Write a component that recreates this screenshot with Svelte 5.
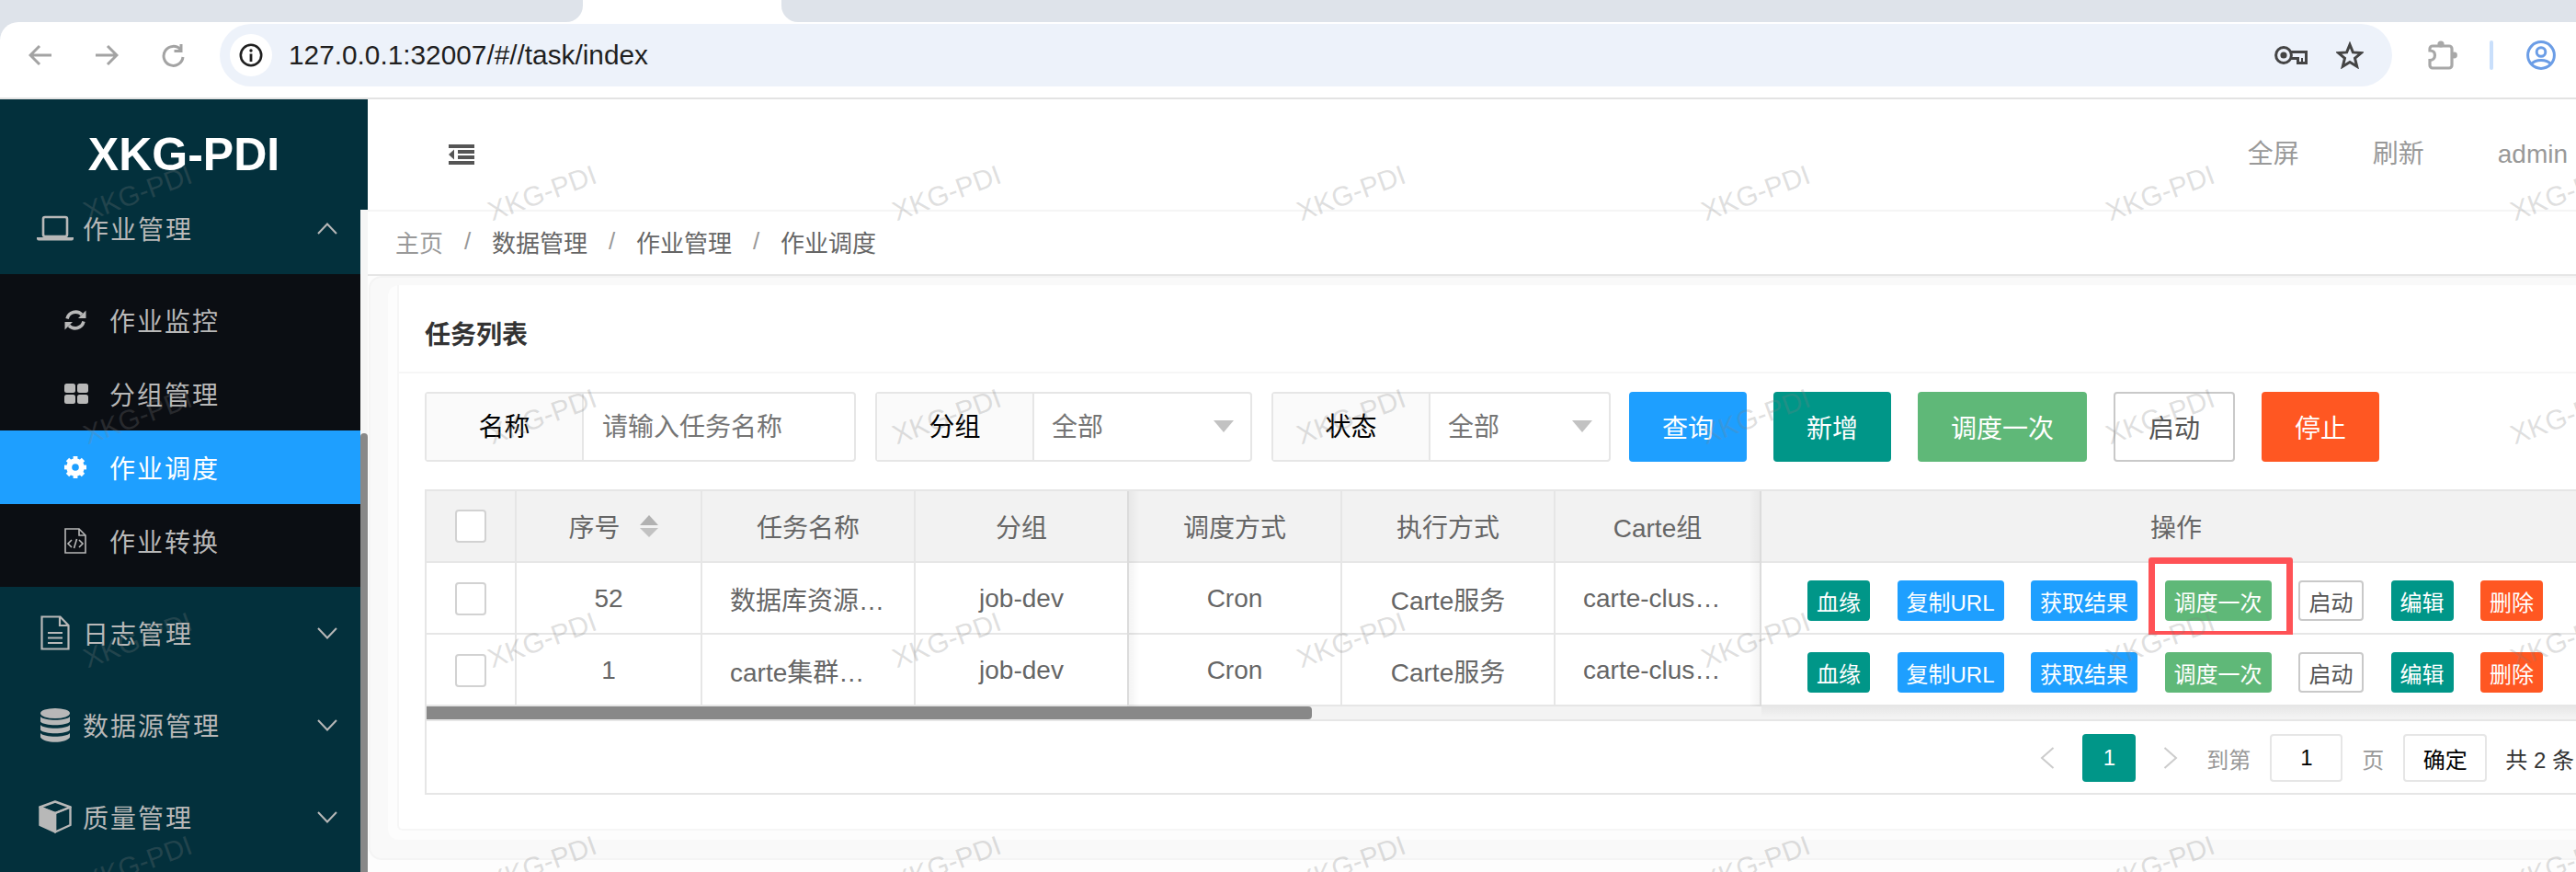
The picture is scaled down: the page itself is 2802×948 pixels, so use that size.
<script>
	const subItems = [
		{ name: '作业监控', icon: 'refresh' },
		{ name: '分组管理', icon: 'grid' },
		{ name: '作业调度', icon: 'gear', active: true },
		{ name: '作业转换', icon: 'code' }
	];

	const groups = [
		{ name: '日志管理', icon: 'log' },
		{ name: '数据源管理', icon: 'db' },
		{ name: '质量管理', icon: 'cube' }
	];

	const columns = ['调度方式', '执行方式', 'Carte组'];

	const rows = [
		{ id: 52, name: '数据库资源同步作业', group: 'job-dev', mark: true },
		{ id: 1, name: 'carte集群监控作业任务', group: 'job-dev', mark: false }
	];

	const actions = [
		{ label: '血缘', tone: 'teal' },
		{ label: '复制URL', tone: 'blue' },
		{ label: '获取结果', tone: 'blue' },
		{ label: '调度一次', tone: 'green', marked: true },
		{ label: '启动', tone: 'plain' },
		{ label: '编辑', tone: 'teal' },
		{ label: '删除', tone: 'orange' }
	];

	const teeth = [0, 45, 90, 135, 180, 225, 270, 315];
	const marks = Array.from({ length: 28 });
</script>

<div class="page">
	<div class="chrome">
		<div class="tabs">
			<div class="tab-l"></div>
			<div class="tab-on"></div>
			<div class="tab-r"></div>
		</div>
		<div class="toolbar">
			<svg class="nav-ic" width="26" height="24" viewBox="0 0 26 24"><path d="M25 12H2M12 2 2 12l10 10" /></svg>
			<svg class="nav-ic" width="26" height="24" viewBox="0 0 26 24"><path d="M1 12h23M14 2l10 10-10 10" /></svg>
			<svg class="nav-ic" width="26" height="26" viewBox="0 0 26 26"><path d="M21.5 7A10.5 10.5 0 1 0 24 15" /><path d="M22 1v7.5h-7.5" /></svg>
			<div class="address">
				<div class="info">
					<svg width="26" height="26" viewBox="0 0 26 26">
						<circle cx="13" cy="13" r="11.2" fill="none" stroke="#1f1f1f" stroke-width="2.6" />
						<circle cx="13" cy="8" r="1.7" fill="#1f1f1f" />
						<rect x="11.6" y="11.5" width="2.8" height="8.5" fill="#1f1f1f" />
					</svg>
				</div>
				<span class="url">127.0.0.1:32007/#//task/index</span>
				<svg class="key" width="36" height="20" viewBox="0 0 36 20" fill="none" stroke="#444" stroke-width="3">
					<circle cx="10" cy="10" r="8.4" />
					<circle cx="10" cy="10" r="3.6" fill="#444" stroke="none" />
					<path d="M18 6.5h16.5V18.5h-9v-5H18" />
					<path d="M30 13v5" stroke-width="2" />
				</svg>
				<svg class="star" width="30" height="30" viewBox="0 0 30 30">
					<path d="M15 3.5l3.4 8.4 9 .7-6.9 5.8 2.2 8.8-7.7-4.8-7.7 4.8 2.2-8.8-6.9-5.8 9-.7z" fill="none" stroke="#444" stroke-width="3" stroke-linejoin="miter" />
				</svg>
			</div>
			<svg class="ext" width="33" height="32" viewBox="0 0 33 32">
				<path d="M5 6h18a3 3 0 0 1 3 3v18a3 3 0 0 1-3 3H5a3 3 0 0 1-3-3v-5.500c3.500 0 5.500-2.500 5.500-5.500S5.500 11 2 11V9a3 3 0 0 1 3-3z" fill="none" stroke="#a8a8a8" stroke-width="3.200" />
				<circle cx="14" cy="4" r="3.600" fill="#a8a8a8" />
				<circle cx="28.500" cy="16" r="3.400" fill="#a8a8a8" />
			</svg>
			<div class="divider"></div>
			<svg class="profile" width="32" height="32" viewBox="0 0 32 32" fill="none" stroke="#6b9de6" stroke-width="3">
				<circle cx="16" cy="16" r="14.400" />
				<circle cx="16" cy="12.500" r="4.800" />
				<path d="M5.500 25.500c4-5.500 17-5.500 21 0" />
			</svg>
		</div>
	</div>

	<div class="app">
		<aside class="side">
			<div class="logo">XKG-PDI</div>
			<div class="side-scroll">
				<nav class="menu">
					<div class="group first">
						<span class="gicon">
							<svg width="40" height="28" viewBox="0 0 40 28">
								<rect x="7" y="2" width="26" height="21" rx="2" fill="none" stroke="#b8b8b8" stroke-width="2.600" />
								<path d="M0 24h40v1.500a2 2 0 0 1-2 2H2a2 2 0 0 1-2-2z" fill="#b8b8b8" />
							</svg>
						</span>
						<span class="gname">作业管理</span>
						<svg class="chev" width="22" height="13" viewBox="0 0 22 13"><path d="M1 12 11 1.500 21 12" /></svg>
					</div>
					<div class="sub">
						{#each subItems as item}
							<div class="sub-item" class:active={item.active}>
								<span class="sicon">
									{#if item.icon === 'refresh'}
										<svg width="24" height="24" viewBox="0 0 24 24" fill="currentColor">
											<path d="M3 10.500A9.500 9.500 0 0 1 19 6" fill="none" stroke="currentColor" stroke-width="3.500" />
											<path d="M23.500 1.500v8.500H15z" />
											<path d="M21 13.500A9.500 9.500 0 0 1 5 18" fill="none" stroke="currentColor" stroke-width="3.500" />
											<path d="M.5 22.500V14H9z" />
										</svg>
									{:else if item.icon === 'grid'}
										<svg width="26" height="22" viewBox="0 0 26 22" fill="currentColor">
											<rect width="12" height="10" rx="2.500" />
											<rect x="14" width="12" height="10" rx="2.500" />
											<rect y="12" width="12" height="10" rx="2.500" />
											<rect x="14" y="12" width="12" height="10" rx="2.500" />
										</svg>
									{:else if item.icon === 'gear'}
										<svg width="24" height="24" viewBox="-12 -12 24 24" fill="#fff">
											<circle r="6.800" fill="none" stroke="#fff" stroke-width="6" />
											{#each teeth as a}
												<rect x="-2.400" y="-12" width="4.800" height="5" transform="rotate({a})" />
											{/each}
										</svg>
									{:else}
										<svg width="24" height="28" viewBox="0 0 24 28" fill="none" stroke="currentColor" stroke-width="1.600">
											<path d="M1 1h15l7 7v19H1z" />
											<path d="M16 1v7h7" />
											<path d="M8 13l-4 4 4 4M16 13l4 4-4 4M13.500 12l-3 10" />
										</svg>
									{/if}
								</span>
								<span class="sname">{item.name}</span>
							</div>
						{/each}
					</div>
					{#each groups as g}
						<div class="group">
							<span class="gicon">
								{#if g.icon === 'log'}
									<svg width="32" height="38" viewBox="0 0 32 38" fill="none" stroke="#b8b8b8" stroke-width="2.200">
										<path d="M1.500 1.500h20l9 9.500v25.500h-29z" />
										<path d="M21 1.500V11h9.500M8 19h16M8 24.500h16M8 30h16" />
									</svg>
								{:else if g.icon === 'db'}
									<svg width="32" height="37" viewBox="0 0 32 37" fill="#b8b8b8">
										<ellipse cx="16" cy="5.500" rx="16" ry="5.500" />
										<path d="M0 9c4 5 28 5 32 0v5.500c-4 5-28 5-32 0z" />
										<path d="M0 18c4 5 28 5 32 0v5.500c-4 5-28 5-32 0z" />
										<path d="M0 27c4 5 28 5 32 0v4.500c-4 7-28 7-32 0z" />
									</svg>
								{:else}
									<svg class="cube" width="36" height="36" viewBox="0 0 36 36" stroke="#b8b8b8" stroke-width="2.400" stroke-linejoin="round">
										<path d="M18 1.500 34.500 7.500 18 14 1.500 7.500z" fill="none" />
										<path d="M1.500 7.500 18 14v20.500L1.500 27z" fill="#b8b8b8" />
										<path d="M34.500 7.500V27L18 34.500V14z" fill="none" />
									</svg>
								{/if}
							</span>
							<span class="gname">{g.name}</span>
							<svg class="chev" width="22" height="13" viewBox="0 0 22 13"><path d="M1 1l10 10.500L21 1" /></svg>
						</div>
					{/each}
				</nav>
				<div class="track"><div class="thumb"></div></div>
			</div>
		</aside>

		<main class="main">
			<header class="top">
				<svg class="fold" width="28" height="22" viewBox="0 0 28 22" fill="#555">
					<rect width="28" height="4" />
					<rect x="10" y="6" width="18" height="4" />
					<rect x="10" y="12" width="18" height="4" />
					<rect y="18" width="28" height="4" />
					<path d="M6 5.500v11L0 11z" />
				</svg>
				<div class="top-links">
					<span>全屏</span>
					<span>刷新</span>
					<span>admin</span>
				</div>
			</header>

			<div class="crumbs">
				<span class="home">主页</span>
				<i>/</i>
				<span>数据管理</span>
				<i>/</i>
				<span>作业管理</span>
				<i>/</i>
				<span>作业调度</span>
			</div>

			<div class="panel">
				<div class="panel-mid">
					<section class="card">
						<h2>任务列表</h2>
						<div class="card-body">
							<div class="filters">
								<div class="field f-name">
									<label for="task-name">名称</label>
									<input id="task-name" placeholder="请输入任务名称" />
								</div>
								<div class="field f-group">
									<span class="label">分组</span>
									<div class="select">全部<b></b></div>
								</div>
								<div class="field f-state">
									<span class="label">状态</span>
									<div class="select">全部<b></b></div>
								</div>
								<button class="btn blue q">查询</button>
								<button class="btn teal">新增</button>
								<button class="btn green">调度一次</button>
								<button class="btn plain">启动</button>
								<button class="btn orange">停止</button>
							</div>

							<div class="table">
								<div class="row head">
									<div class="cell"><span class="check"></span></div>
									<div class="cell">
										<span class="sort-wrap">序号
											<svg width="20" height="24" viewBox="0 0 20 24">
												<path d="M10 0l10 11H0z" fill="#b2b2b2" />
												<path d="M0 14h20L10 24z" fill="#c2c2c2" />
											</svg>
										</span>
									</div>
									<div class="cell">任务名称</div>
									<div class="cell edge-l">分组</div>
									{#each columns as c}
										<div class="cell">{c}</div>
									{/each}
									<div class="cell edge-r ops-title">操作</div>
								</div>
								{#each rows as r}
									<div class="row body">
										<div class="cell"><span class="check"></span></div>
										<div class="cell">{r.id}</div>
										<div class="cell"><span class="clip">{r.name}</span></div>
										<div class="cell edge-l">{r.group}</div>
										<div class="cell">Cron</div>
										<div class="cell">Carte服务</div>
										<div class="cell start"><span class="clip short">carte-cluster</span></div>
										<div class="cell edge-r ops">
											{#each actions as a}
												<span class="op-wrap">
													<button class="btn mini {a.tone}">{a.label}</button>
													{#if a.marked && r.mark}
														<span class="callout"></span>
													{/if}
												</span>
											{/each}
										</div>
									</div>
								{/each}
								<div class="hscroll">
									<div class="hthumb"></div>
									<div class="hshade"></div>
								</div>
								<div class="pager">
									<svg class="pg-arrow" width="16" height="24" viewBox="0 0 16 24"><path d="M14.500 1 2 12l12.500 11" /></svg>
									<span class="pg-on">1</span>
									<svg class="pg-arrow next" width="16" height="24" viewBox="0 0 16 24"><path d="M1.500 1 14 12 1.500 23" /></svg>
									<span class="pg-text to">到第</span>
									<span class="pg-input">1</span>
									<span class="pg-text pg">页</span>
									<button class="pg-ok">确定</button>
									<span class="pg-total">共 2 条</span>
								</div>
							</div>
						</div>
					</section>
				</div>
			</div>
		</main>
	</div>

	<div class="watermarks">
		{#each marks as _}
			<span>XKG-PDI</span>
		{/each}
	</div>
</div>

<style>
	:global(body) {
		margin: 0;
		background: #fff;
		font-family: 'Liberation Sans', 'Noto Sans CJK SC', sans-serif;
	}

	.page {
		position: relative;
		width: 2802px;
		height: 948px;
		overflow: hidden;
		font-family: 'Liberation Sans', 'Noto Sans CJK SC', sans-serif;
		font-size: 28px;
		color: #666;
	}

	/* browser frame */
	.chrome {
		background: #dee3ea;
	}

	.tabs {
		display: flex;
		height: 24px;
		background: #fff;
	}

	.tab-l,
	.tab-r {
		background: #dee3ea;
	}

	.tab-l {
		width: 634px;
		border-bottom-right-radius: 18px;
	}

	.tab-on {
		width: 216px;
	}

	.tab-r {
		flex: 1;
		border-bottom-left-radius: 18px;
	}

	.toolbar {
		display: flex;
		align-items: center;
		box-sizing: border-box;
		height: 84px;
		padding: 0 0 10px 31px;
		background: #fff;
		border-top-left-radius: 20px;
		border-bottom: 2px solid #e3e3e3;
	}

	.nav-ic {
		margin-right: 46px;
		fill: none;
		stroke: #a3a3a3;
		stroke-width: 3;
	}

	.nav-ic:nth-child(3) {
		margin-right: 38px;
	}

	.address {
		display: flex;
		align-items: center;
		width: 2363px;
		height: 68px;
		padding-left: 11px;
		box-sizing: border-box;
		background: #edf2fa;
		border-radius: 34px;
	}

	.info {
		display: flex;
		align-items: center;
		justify-content: center;
		width: 46px;
		height: 46px;
		margin-right: 18px;
		background: #fff;
		border-radius: 23px;
	}

	.url {
		flex: 1;
		font-size: 29.800px;
		color: #1f1f1f;
	}

	.key {
		margin-right: 31px;
	}

	.star {
		margin-right: 31px;
	}

	.ext {
		margin-left: 39px;
	}

	.divider {
		width: 4px;
		height: 32px;
		margin-left: 34px;
		background: #c9dffb;
		border-radius: 2px;
	}

	.profile {
		margin-left: 36px;
	}

	/* app shell */
	.app {
		display: flex;
		height: 840px;
	}

	.side {
		display: flex;
		flex-direction: column;
		flex: none;
		width: 400px;
	}

	.logo {
		height: 120px;
		line-height: 120px;
		text-align: center;
		font-size: 50px;
		font-weight: 700;
		color: #fff;
		background: #03303c;
	}

	.side-scroll {
		display: flex;
		flex: 1;
		min-height: 0;
	}

	.menu {
		width: 392px;
		overflow: hidden;
		background: #03303c;
	}

	.track {
		box-sizing: border-box;
		width: 8px;
		padding-top: 243px;
		background: #f6f6f6;
	}

	.thumb {
		height: 100%;
		background: #888;
		border-radius: 4px 4px 0 0;
	}

	.group {
		display: flex;
		align-items: center;
		height: 100px;
		padding-left: 40px;
		color: #b8b8b8;
	}

	.group.first {
		margin-top: -30px;
	}

	.gicon {
		display: flex;
		justify-content: center;
		width: 40px;
		margin-right: 10px;
	}

	.gname {
		flex: 1;
		letter-spacing: 2px;
	}

	.chev {
		margin-right: 25px;
		fill: none;
		stroke: #b8b8b8;
		stroke-width: 2;
	}

	.sub {
		padding: 10px 0;
		background: #0b0e13;
	}

	.sub-item {
		display: flex;
		align-items: center;
		height: 80px;
		padding-left: 70px;
		color: #b8b8b8;
	}

	.sub-item.active {
		color: #fff;
		background: #1e9fff;
	}

	.sicon {
		display: flex;
		width: 26px;
		margin-right: 23px;
	}

	.sname {
		letter-spacing: 2px;
	}

	.main {
		flex: 1;
		min-width: 0;
		overflow: hidden;
		background: #fdfdfd;
	}

	.top {
		display: flex;
		align-items: center;
		justify-content: space-between;
		box-sizing: border-box;
		height: 122px;
		padding: 0 9px 0 88px;
		background: #fff;
		border-bottom: 2px solid #f5f5f5;
	}

	.top-links {
		display: flex;
		gap: 80px;
		line-height: 40px;
		color: #999;
	}

	.top-links span {
		height: 40px;
	}

	.crumbs {
		display: flex;
		align-items: center;
		box-sizing: border-box;
		height: 70px;
		padding: 0 0 3px 30px;
		font-size: 26px;
		background: #fff;
		border-bottom: 2px solid #e6e6e6;
	}

	.crumbs .home {
		color: #999;
	}

	.crumbs i {
		width: 53px;
		font-style: normal;
		text-align: center;
		color: #999;
	}

	.panel {
		box-sizing: border-box;
		width: 2600px;
		margin-left: 1px;
		padding: 8px 0 20px 19px;
		background: #f9f9f9;
		border: 2px solid #f4f4f4;
		border-radius: 14px;
	}

	.panel-mid {
		padding: 0 0 10px 10px;
		background: #fdfdfd;
		border-radius: 12px;
	}

	.card {
		background: #fff;
		border-left: 2px solid #f6f6f6;
		border-bottom: 2px solid #f6f6f6;
		border-bottom-left-radius: 6px;
	}

	h2 {
		box-sizing: border-box;
		height: 96px;
		margin: 0;
		padding: 10px 0 0 28px;
		line-height: 90px;
		font-size: 28px;
		font-weight: 700;
		color: #333;
		border-bottom: 2px solid #f6f6f6;
	}

	.card-body {
		padding: 20px 0 37px 28px;
	}

	/* filter row */
	.filters {
		display: flex;
		gap: 29px;
		margin-bottom: 30px;
	}

	.field {
		display: flex;
		box-sizing: border-box;
		height: 76px;
		margin-right: -8px;
		background: #fff;
		border: 2px solid #e6e6e6;
		border-radius: 4px;
	}

	.f-name {
		width: 469px;
	}

	.f-group {
		width: 410px;
	}

	.f-state {
		width: 369px;
	}

	.field label,
	.label {
		flex: none;
		width: 169px;
		line-height: 74px;
		text-align: center;
		color: #000;
		background: #fafafa;
		border-right: 2px solid #e6e6e6;
	}

	.field input {
		flex: 1;
		min-width: 0;
		padding: 2px 0 0 20px;
		border: 0;
		outline: 0;
		background: transparent;
		font: inherit;
	}

	.field input::placeholder {
		color: #757575;
		opacity: 1;
	}

	.select {
		position: relative;
		flex: 1;
		padding-left: 19px;
		line-height: 74px;
		color: #757575;
	}

	.select b {
		position: absolute;
		top: 29px;
		right: 18px;
		border-style: solid;
		border-width: 13px 11.500px 0;
		border-color: #c2c2c2 transparent transparent;
	}

	.btn {
		flex: none;
		box-sizing: border-box;
		height: 76px;
		padding: 0 36px;
		border: 0;
		border-radius: 4px;
		font: inherit;
		color: #fff;
	}

	.btn.q {
		margin-left: -1px;
	}

	.blue {
		background: #1e9fff;
	}

	.teal {
		background: #009688;
	}

	.green {
		background: #5fb878;
	}

	.orange {
		background: #ff5722;
	}

	.btn.plain {
		color: #555;
		background: #fff;
		border: 2px solid #c9c9c9;
	}

	.btn.mini {
		height: 44px;
		padding: 0 10px;
		font-size: 24px;
		white-space: nowrap;
	}

	.btn.mini.plain {
		padding: 0 9.500px;
	}

	/* table */
	.table {
		box-sizing: border-box;
		width: 2360px;
		background: #fff;
		border: 2px solid #e6e6e6;
	}

	.row {
		display: grid;
		grid-template-columns: 98px 202px 232px 232px 232px 232px 224px 904px;
		box-sizing: border-box;
		height: 78px;
		border-bottom: 2px solid #e6e6e6;
	}

	.head {
		background: #f2f2f2;
	}

	.cell {
		display: flex;
		align-items: center;
		justify-content: center;
		box-sizing: border-box;
		min-width: 0;
		padding: 0 30px;
		border-right: 2px solid #e6e6e6;
		white-space: nowrap;
	}

	.body .cell {
		padding-top: 2px;
	}

	.cell.start {
		justify-content: flex-start;
	}

	.edge-l,
	.edge-r {
		position: relative;
		z-index: 1;
	}

	.edge-l::after,
	.edge-r::before {
		content: '';
		position: absolute;
		top: 0;
		bottom: -2px;
		width: 14px;
		pointer-events: none;
	}

	.edge-l::after {
		left: 100%;
		background: linear-gradient(to right, rgba(0, 0, 0, 0.05), transparent);
	}

	.edge-r::before {
		right: 100%;
		background: linear-gradient(to left, rgba(0, 0, 0, 0.05), transparent);
	}

	.clip {
		display: block;
		width: 100%;
		overflow: hidden;
		text-overflow: ellipsis;
	}

	.clip.short {
		width: 150px;
	}

	.check {
		box-sizing: border-box;
		width: 34px;
		height: 36px;
		background: #fff;
		border: 2px solid #d2d2d2;
		border-radius: 4px;
	}

	.sort-wrap {
		display: inline-flex;
		align-items: center;
		gap: 21px;
		margin-left: 10px;
	}

	.ops {
		justify-content: flex-start;
		gap: 29.500px;
		padding: 6px 0 0 50px;
		background: #fff;
	}

	.body .ops {
		padding-top: 6px;
	}

	.ops-title {
		padding: 0;
	}

	.op-wrap {
		position: relative;
		display: flex;
	}

	.callout {
		position: absolute;
		top: -25px;
		right: -23px;
		bottom: -18px;
		left: -18px;
		border: 7px solid #ff5256;
		border-radius: 3px;
		pointer-events: none;
	}

	.hscroll {
		display: flex;
		justify-content: space-between;
		box-sizing: border-box;
		height: 16px;
		background: #f3f3f3;
		border-bottom: 2px solid #e6e6e6;
	}

	.hthumb {
		width: 963px;
		height: 14px;
		background: #888;
		border-radius: 0 4px 4px 0;
	}

	.hshade {
		width: 904px;
		height: 12px;
		background: linear-gradient(to bottom, rgba(0, 0, 0, 0.05), transparent);
	}

	.pager {
		display: flex;
		align-items: center;
		justify-content: flex-end;
		box-sizing: border-box;
		height: 78px;
		padding: 2px 20px 0 0;
		font-size: 24px;
	}

	.pg-arrow {
		fill: none;
		stroke: #ccc;
		stroke-width: 2;
	}

	.pg-on {
		width: 58px;
		height: 52px;
		margin: 0 30px;
		line-height: 52px;
		text-align: center;
		color: #fff;
		background: #009688;
		border-radius: 4px;
	}

	.pg-text {
		color: #999;
	}

	.to {
		margin: 0 21px 0 31px;
	}

	.pg {
		margin: 0 21px;
	}

	.pg-input {
		box-sizing: border-box;
		width: 79px;
		height: 52px;
		line-height: 48px;
		text-align: center;
		color: #000;
		background: #fff;
		border: 2px solid #e6e6e6;
		border-radius: 4px;
	}

	.pg-ok {
		box-sizing: border-box;
		width: 91px;
		height: 52px;
		margin-right: 20px;
		padding: 0;
		font: inherit;
		color: #000;
		background: #fff;
		border: 2px solid #e6e6e6;
		border-radius: 4px;
	}

	.pg-total {
		color: #333;
		white-space: nowrap;
	}

	/* watermark lies over the whole page */
	.watermarks {
		position: absolute;
		top: 88px;
		left: -70px;
		z-index: 10;
		display: grid;
		grid-template-columns: repeat(7, 440px);
		grid-auto-rows: 243px;
		place-items: center;
		pointer-events: none;
	}

	.watermarks span {
		font-size: 30px;
		color: rgba(128, 128, 128, 0.25);
		transform: rotate(-20deg);
	}
</style>
